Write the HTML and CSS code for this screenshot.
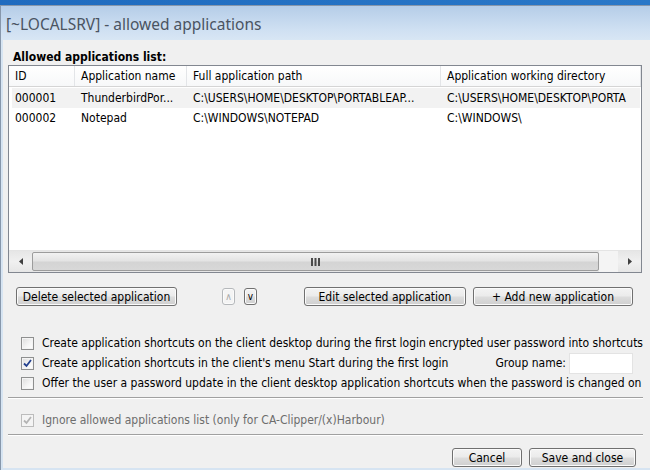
FILE: index.html
```html
<!DOCTYPE html>
<html lang="en">
<head>
    <meta charset="UTF-8">
    <title>[~LOCALSRV] - allowed applications</title>
    <link rel="stylesheet" href="styles.css">
</head>
<body>

    <div class="desk"></div>

    <div class="window">
        <!-- Title bar -->
        <div class="titlebar">[~LOCALSRV] - allowed applications</div>

        <div class="client">
            <div class="list-label">Allowed applications list:</div>

            <!-- Applications list view -->
            <div class="listview">
                <div class="lv-row lv-head">
                    <div class="cell">ID</div>
                    <div class="cell">Application name</div>
                    <div class="cell">Full application path</div>
                    <div class="cell">Application working directory</div>
                </div>
                <div class="lv-body">
                    <div class="lv-row selected">
                        <div class="cell">000001</div>
                        <div class="cell">ThunderbirdPor...</div>
                        <div class="cell">C:\USERS\HOME\DESKTOP\PORTABLEAP...</div>
                        <div class="cell">C:\USERS\HOME\DESKTOP\PORTA</div>
                    </div>
                    <div class="lv-row">
                        <div class="cell">000002</div>
                        <div class="cell">Notepad</div>
                        <div class="cell">C:\WINDOWS\NOTEPAD</div>
                        <div class="cell">C:\WINDOWS\</div>
                    </div>
                </div>
                <div class="hscroll">
                    <div class="sb-btn">
                        <svg width="4" height="7" viewBox="0 0 4 7"><path d="M4 0 L0 3.5 L4 7 Z" fill="#404040"/></svg>
                    </div>
                    <div class="sb-track">
                        <div class="sb-thumb">
                            <svg width="9" height="8" viewBox="0 0 9 8">
                                <rect x="0" y="0" width="2" height="8" fill="#4a4a4a"/>
                                <rect x="3.5" y="0" width="2" height="8" fill="#4a4a4a"/>
                                <rect x="7" y="0" width="2" height="8" fill="#4a4a4a"/>
                            </svg>
                        </div>
                        <div class="sb-rest"></div>
                    </div>
                    <div class="sb-btn">
                        <svg width="4" height="7" viewBox="0 0 4 7"><path d="M0 0 L4 3.5 L0 7 Z" fill="#404040"/></svg>
                    </div>
                </div>
            </div>

            <!-- List actions -->
            <div class="list-actions">
                <button class="btn btn-delete">Delete selected application</button>
                <div class="move-btns">
                    <button class="btn btn-small" disabled>&#8743;</button>
                    <button class="btn btn-small">v</button>
                </div>
                <button class="btn btn-edit">Edit selected application</button>
                <button class="btn btn-add">+ Add new application</button>
            </div>

            <!-- Shortcut options -->
            <div class="options">
                <div class="opt-row">
                    <span class="check"></span>
                    <span class="opt-text">Create application shortcuts on the client desktop during the first login</span>
                    <span class="opt-clip">Put encrypted user password into shortcuts</span>
                </div>
                <div class="opt-row">
                    <span class="check checked">
                        <svg width="9" height="9" viewBox="0 0 9 9"><path d="M1 4.5 L3.5 7 L8 1" fill="none" stroke="#24418f" stroke-width="1.8"/></svg>
                    </span>
                    <span class="opt-text">Create application shortcuts in the client's menu Start during the first login</span>
                    <span class="group-label">Group name:</span>
                    <input type="text" class="group-input">
                </div>
                <div class="opt-row">
                    <span class="check"></span>
                    <span class="opt-text">Offer the user a password update in the client desktop application shortcuts when the password is changed on</span>
                </div>
            </div>

            <div class="sep"></div>

            <div class="opt-row ignore-row">
                <span class="check disabled">
                    <svg width="9" height="9" viewBox="0 0 9 9"><path d="M1 4.5 L3.5 7 L8 1" fill="none" stroke="#b4b4b4" stroke-width="1.8"/></svg>
                </span>
                <span class="opt-text">Ignore allowed applications list (only for CA-Clipper/(x)Harbour)</span>
            </div>

            <div class="sep"></div>

            <!-- Dialog buttons -->
            <div class="footer">
                <button class="btn btn-cancel">Cancel</button>
                <button class="btn btn-save">Save and close</button>
            </div>
        </div>
    </div>

</body>
</html>
```

FILE: styles.css
```css
/* Dialog window, cut by the screenshot on the right */
body {
    margin: 0;
    width: 650px;
    height: 470px;
    overflow: hidden;
    font-family: "DejaVu Sans Condensed", "Liberation Sans", sans-serif;
    font-size: 12px;
    color: #000;
    background-color: #dce7f3;
}

.desk {
    height: 5px;
    background: linear-gradient(to right, #1f6bbf, #2a78c8);
}

.window {
    height: 465px;
    display: flex;
    flex-direction: column;
    border-left: 1px solid #8797ab;
    border-top: 1px solid #8797ab;
    box-sizing: border-box;
    background-color: #d6e4f2;
}

.titlebar {
    height: 34px;
    padding-left: 5px;
    line-height: 36px;
    font-family: "Noto Sans", sans-serif;
    font-size: 15.5px;
    color: #4a5462;
    background: linear-gradient(to bottom, #b5cde8, #cfe0f2 70%, #d8e6f4);
    white-space: nowrap;
}

/* Main client area */
.client {
    flex: 1;
    margin-left: 2px;
    margin-bottom: 2px;
    background-color: #f0f0f0;
    display: flex;
    flex-direction: column;
}

.list-label {
    margin: 10px 0 0 10px;
    height: 15px;
    line-height: 15px;
    font-weight: bold;
}

/* List view */
.listview {
    margin-left: 5px;
    width: 634px;
    height: 208px;
    border: 1px solid #828790;
    box-sizing: border-box;
    background-color: #fff;
    display: flex;
    flex-direction: column;
}

.lv-row {
    display: grid;
    grid-template-columns: 66px 112px 254px 1fr;
    height: 20px;
    line-height: 20px;
    white-space: nowrap;
}

.lv-row .cell {
    padding-left: 6px;
    overflow: hidden;
}

.lv-head {
    height: 21px;
    background: linear-gradient(to bottom, #ffffff, #f7f8f9);
    border-bottom: 1px solid #d5d5d5;
    box-sizing: border-box;
}

.lv-head .cell {
    border-right: 1px solid #e3e5e8;
}

.lv-body {
    flex: 1;
    padding: 1px 1px 0 0;
}

.lv-row.selected {
    background: linear-gradient(to right, #fff 3px, #f2f2f2 3px);
}

/* Horizontal scrollbar */
.hscroll {
    height: 21px;
    display: flex;
    background: linear-gradient(to bottom, #e6e6e6, #f0f0f0 50%, #e6e6e6);
    border-top: 1px solid #e4e4e4;
}

.sb-btn {
    width: 23px;
    display: flex;
    align-items: center;
    justify-content: center;
}

.sb-track {
    flex: 1;
    display: flex;
}

.sb-thumb {
    width: 567px;
    margin: 1px 0;
    border: 1px solid #9c9c9c;
    border-radius: 2px;
    box-sizing: border-box;
    background: linear-gradient(to bottom, #f2f2f2, #e4e4e4 45%, #d4d4d4 55%, #d8d8d8);
    display: flex;
    align-items: center;
    justify-content: center;
}

.sb-rest {
    flex: 1;
    background-color: #f4f4f4;
}

/* Push buttons */
.btn {
    font-family: inherit;
    font-size: inherit;
    color: #000;
    height: 19px;
    padding: 0;
    border: 1px solid #707070;
    border-radius: 3px;
    background: linear-gradient(to bottom, #f3f3f3, #ebebeb 48%, #dddddd 52%, #cfcfcf);
    box-shadow: inset 0 0 0 1px #fbfbfb;
}

.btn:disabled {
    color: #a8a8a8;
    border-color: #b5b8bb;
    background: #f4f4f4;
}

.list-actions {
    margin-top: 14px;
    display: flex;
    align-items: center;
}

.btn-delete {
    margin-left: 13px;
    width: 161px;
}

.move-btns {
    margin-left: 45px;
    display: flex;
    gap: 9px;
}

.btn-small {
    width: 13px;
    height: 17px;
    font-size: 10px;
    line-height: 12px;
}

.btn-edit {
    margin-left: 47px;
    width: 162px;
}

.btn-add {
    margin-left: 7px;
    width: 160px;
}

/* Check box options */
.options {
    margin-top: 27px;
}

.opt-row {
    height: 20px;
    display: flex;
    align-items: center;
    white-space: nowrap;
    padding-left: 18px;
    width: 622px;
}

.check {
    width: 13px;
    height: 13px;
    flex: none;
    border: 1px solid #8e8f8f;
    box-sizing: border-box;
    background: linear-gradient(135deg, #dcdcdc, #f6f6f6 60%, #ffffff);
    box-shadow: inset 0 0 0 1px #f4f4f4;
    display: flex;
    align-items: center;
    justify-content: center;
    margin-right: 8px;
}

.check.disabled {
    border-color: #bcbcbc;
    background: #f4f4f4;
}

/* second label hidden under the first one in the original dialog */
.opt-clip {
    flex: 1;
    min-width: 0;
    margin-left: 3px;
    overflow: hidden;
    direction: rtl;
    text-align: left;
}

.group-label {
    margin-left: 47px;
}

.group-input {
    margin-left: 3px;
    width: 64px;
    height: 21px;
    box-sizing: border-box;
    border: 1px solid #e3e3e3;
    background: #fff;
}

.sep {
    margin: 4px 0 0 5px;
    width: 635px;
    height: 1px;
    background-color: #a0a0a0;
    border-bottom: 1px solid #fff;
}

.ignore-row {
    margin-top: 11px;
    color: #6d6d6d;
}

.footer {
    margin-top: 12px;
    display: flex;
    justify-content: flex-end;
    gap: 7px;
    width: 633px;
}

.btn-cancel {
    width: 70px;
}

.btn-save {
    width: 107px;
}
```
